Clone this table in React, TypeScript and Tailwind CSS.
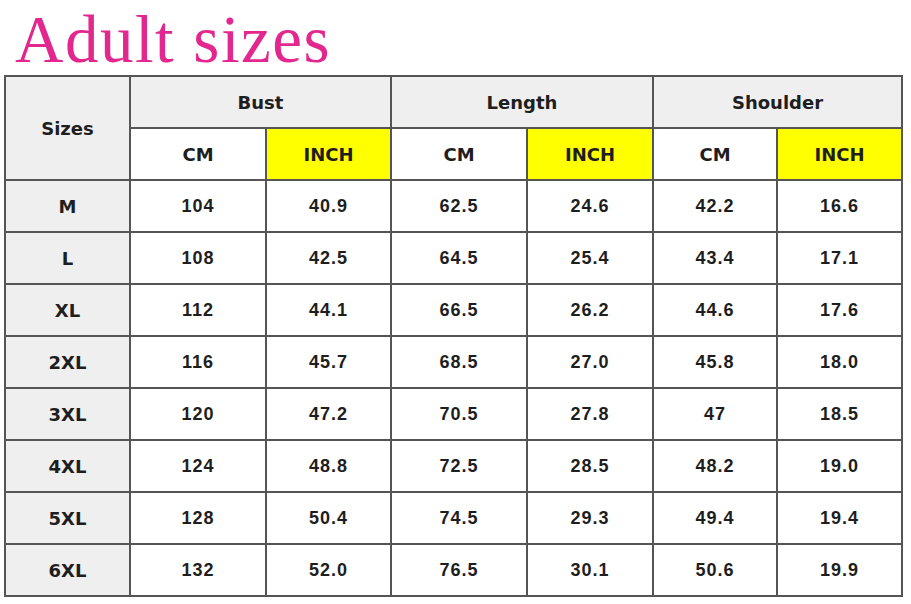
const rows: [string, string, string, string, string, string, string][] = [
  ['M', '104', '40.9', '62.5', '24.6', '42.2', '16.6'],
  ['L', '108', '42.5', '64.5', '25.4', '43.4', '17.1'],
  ['XL', '112', '44.1', '66.5', '26.2', '44.6', '17.6'],
  ['2XL', '116', '45.7', '68.5', '27.0', '45.8', '18.0'],
  ['3XL', '120', '47.2', '70.5', '27.8', '47', '18.5'],
  ['4XL', '124', '48.8', '72.5', '28.5', '48.2', '19.0'],
  ['5XL', '128', '50.4', '74.5', '29.3', '49.4', '19.4'],
  ['6XL', '132', '52.0', '76.5', '30.1', '50.6', '19.9'],
];

// labels use a wider face, numbers stay narrow like in the source chart
const label = "flex items-center justify-center font-['DejaVu_Sans',sans-serif] text-[18px]";
const num = "flex items-center justify-center bg-white font-['Liberation_Sans',Arial,sans-serif] text-[18px] tracking-[1px]";
const gray = `${label} bg-[#efefef]`;
const white = `${label} bg-white`;
const yellow = `${label} bg-[#ffff00]`;

export default function App() {
  return (
    <div className="min-h-[604px] w-[911px] bg-white pt-[6px] pl-[4px]">
      <h1 className="ml-[11px] font-['Liberation_Serif',serif] text-[67px] leading-[67px] font-normal tracking-[1.5px] text-[#e2278e]">
        Adult sizes
      </h1>
      <div className="mt-[2px] grid w-fit grid-cols-[123px_134px_123px_134px_124px_122px_123px] grid-rows-[repeat(10,50px)] gap-[2px] bg-[#555555] p-[2px] font-bold text-[#1e1e1e]">
        <div className={`${gray} row-span-2`}>Sizes</div>
        <div className={`${gray} col-span-2`}>Bust</div>
        <div className={`${gray} col-span-2`}>Length</div>
        <div className={`${gray} col-span-2`}>Shoulder</div>
        <div className={white}>CM</div>
        <div className={yellow}>INCH</div>
        <div className={white}>CM</div>
        <div className={yellow}>INCH</div>
        <div className={white}>CM</div>
        <div className={yellow}>INCH</div>
        {rows.map((r) => (
          <div key={r[0]} className="contents">
            <div className={gray}>{r[0]}</div>
            {r.slice(1).map((v, i) => (
              <div key={i} className={num}>
                {v}
              </div>
            ))}
          </div>
        ))}
      </div>
    </div>
  );
}
